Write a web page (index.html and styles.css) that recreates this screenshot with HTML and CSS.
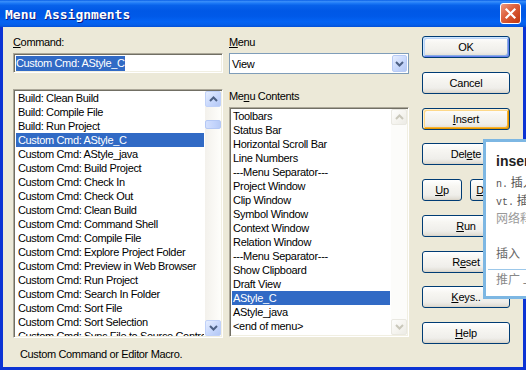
FILE: index.html
```html
<!DOCTYPE html>
<html>
<head>
<meta charset="utf-8">
<title>Menu Assignments</title>
<link rel="stylesheet" href="styles.css">
</head>
<body>
<div class="window">
  <div class="titlebar">
    <span class="title">Menu Assignments</span>
    <span class="close"><svg width="13" height="13" viewBox="0 0 13 13"><path d="M2.5 2.5 L10.5 10.5 M10.5 2.5 L2.5 10.5" stroke="#fff" stroke-width="2.2" stroke-linecap="square"/></svg></span>
  </div>
  <div class="frame">
    <div class="body">
      <div class="main">
        <div class="col-left">
          <div class="label"><u>C</u>ommand:</div>
          <div class="edit"><span class="sel-text">Custom Cmd: AStyle_C</span></div>
          <div class="list list-cmd">
            <div class="items">
              <div class="item">Build: Clean Build</div>
              <div class="item">Build: Compile File</div>
              <div class="item">Build: Run Project</div>
              <div class="item sel">Custom Cmd: AStyle_C</div>
              <div class="item">Custom Cmd: AStyle_java</div>
              <div class="item">Custom Cmd: Build Project</div>
              <div class="item">Custom Cmd: Check In</div>
              <div class="item">Custom Cmd: Check Out</div>
              <div class="item">Custom Cmd: Clean Build</div>
              <div class="item">Custom Cmd: Command Shell</div>
              <div class="item">Custom Cmd: Compile File</div>
              <div class="item">Custom Cmd: Explore Project Folder</div>
              <div class="item">Custom Cmd: Preview in Web Browser</div>
              <div class="item">Custom Cmd: Run Project</div>
              <div class="item">Custom Cmd: Search In Folder</div>
              <div class="item">Custom Cmd: Sort File</div>
              <div class="item">Custom Cmd: Sort Selection</div>
              <div class="item">Custom Cmd: Sync File to Source Control</div>
            </div>
            <div class="vscroll">
              <div class="sbtn"><svg width="9" height="6" viewBox="0 0 9 6"><path d="M1 5 L4.5 1.5 L8 5" fill="none" stroke="#4D6185" stroke-width="2"/></svg></div>
              <div class="track"><div class="thumb"></div></div>
              <div class="sbtn"><svg width="9" height="6" viewBox="0 0 9 6"><path d="M1 1 L4.5 4.5 L8 1" fill="none" stroke="#4D6185" stroke-width="2"/></svg></div>
            </div>
          </div>
        </div>
        <div class="col-mid">
          <div class="label"><u>M</u>enu</div>
          <div class="combo">
            <span class="combo-text">View</span>
            <span class="cbtn"><svg width="9" height="6" viewBox="0 0 9 6"><path d="M1 1 L4.5 4.5 L8 1" fill="none" stroke="#4D6185" stroke-width="2"/></svg></span>
          </div>
          <div class="label label-contents">Me<u>n</u>u Contents</div>
          <div class="list list-menu">
            <div class="items">
              <div class="item">Toolbars</div>
              <div class="item">Status Bar</div>
              <div class="item">Horizontal Scroll Bar</div>
              <div class="item">Line Numbers</div>
              <div class="item">---Menu Separator---</div>
              <div class="item">Project Window</div>
              <div class="item">Clip Window</div>
              <div class="item">Symbol Window</div>
              <div class="item">Context Window</div>
              <div class="item">Relation Window</div>
              <div class="item">---Menu Separator---</div>
              <div class="item">Show Clipboard</div>
              <div class="item">Draft View</div>
              <div class="item sel">AStyle_C</div>
              <div class="item">AStyle_java</div>
              <div class="item">&lt;end of menu&gt;</div>
            </div>
            <div class="vscroll vscroll-dis">
              <div class="sbtn"><svg width="9" height="6" viewBox="0 0 9 6"><path d="M1 5 L4.5 1.5 L8 5" fill="none" stroke="#C9C7BA" stroke-width="2"/></svg></div>
              <div class="track"></div>
              <div class="sbtn"><svg width="9" height="6" viewBox="0 0 9 6"><path d="M1 1 L4.5 4.5 L8 1" fill="none" stroke="#C9C7BA" stroke-width="2"/></svg></div>
            </div>
          </div>
        </div>
        <div class="col-btns">
          <div class="btn btn-default">OK</div>
          <div class="btn">Cancel</div>
          <div class="btn btn-hot"><u>I</u>nsert</div>
          <div class="btn">Del<u>e</u>te</div>
          <div class="btn-row">
            <div class="btn btn-sm"><u>U</u>p</div>
            <div class="btn btn-sm"><u>D</u>own</div>
          </div>
          <div class="btn"><u>R</u>un</div>
          <div class="btn">R<u>e</u>set</div>
          <div class="btn"><u>K</u>eys..</div>
          <div class="btn"><u>H</u>elp</div>
        </div>
      </div>
      <div class="status">Custom Command or Editor Macro.</div>
    </div>
  </div>
  <div class="tooltip">
    <div class="tt-word">insert</div>
    <div class="tt-line tt-def tt-first"><span class="tt-pos">n.</span> 插入物</div>
    <div class="tt-line tt-def"><span class="tt-pos">vt.</span> 插入</div>
    <div class="tt-line tt-web">网络释义</div>
    <div class="tt-line tt-plain">插入</div>
    <div class="tt-sep"></div>
    <div class="tt-line tt-promo">推广 上</div>
  </div>
</div>
</body>
</html>
```
FILE: styles.css
```css
* { box-sizing: border-box; }
html, body { margin: 0; padding: 0; }
body {
  width: 526px;
  height: 370px;
  overflow: hidden;
  font-family: "Liberation Sans", Arial, sans-serif;
  font-size: 11px;
  color: #000;
}
u { text-decoration: underline; text-underline-offset: 1px; }

.window {
  position: relative;
  width: 526px;
  height: 370px;
  display: flex;
  flex-direction: column;
  background: #0B33D4;
  overflow: hidden;
}

.titlebar {
  flex: none;
  height: 27px;
  display: flex;
  align-items: center;
  justify-content: space-between;
  padding: 0 5px 0 5px;
  background: linear-gradient(to bottom, #0A5FE6 0%, #3A8FFA 6%, #1C79F6 12%, #0862EA 20%, #0058E6 40%, #0059E8 60%, #0463F3 80%, #055FEA 92%, #0450D6 100%);
}
.title {
  margin-top: 2px;
  font-family: "DejaVu Sans Mono", monospace;
  font-weight: bold;
  font-size: 13px;
  color: #fff;
  text-shadow: 1px 1px 0 #0A1A80;
}
.close {
  width: 21px;
  height: 21px;
  border: 1px solid #fff;
  border-radius: 3px;
  background: linear-gradient(135deg, #EE9A80 0%, #DE6340 40%, #CF4A24 70%, #C0380F 100%);
  display: flex;
  align-items: center;
  justify-content: center;
}

.frame {
  flex: 1;
  display: flex;
  padding: 0 3px 3px 3px;
}
.body {
  flex: 1;
  background: #ECE9D8;
  display: flex;
  flex-direction: column;
  padding: 8px 0 0 10px;
}

.main {
  display: flex;
  align-items: flex-start;
}
.col-left {
  width: 210px;
  display: flex;
  flex-direction: column;
}
.col-mid {
  width: 180px;
  margin-left: 6px;
  display: flex;
  flex-direction: column;
}
.col-btns {
  width: 88px;
  margin-left: 13px;
  margin-top: 1px;
  display: flex;
  flex-direction: column;
  gap: 13.75px;
}

.label {
  height: 14px;
  line-height: 14px;
  letter-spacing: -0.35px;
  margin-bottom: 4px;
  white-space: nowrap;
}
.label-contents {
  margin-top: 15px;
  margin-bottom: 4px;
}

.edit {
  height: 20px;
  background: #fff;
  border: 1px solid;
  border-color: #ACA899 #FFFFFF #FFFFFF #ACA899;
  box-shadow: inset 1px 1px 0 #716F64, inset -1px -1px 0 #F1EFE2;
  padding: 2px 0 0 2px;
}
.sel-text {
  display: inline-block;
  height: 15px;
  line-height: 15px;
  background: #316AC5;
  color: #fff;
  letter-spacing: -0.35px;
  white-space: nowrap;
}

.combo {
  height: 21px;
  background: #fff;
  border: 1px solid #7F9DB9;
  display: flex;
  align-items: center;
  padding-left: 2px;
}
.combo-text {
  flex: 1;
  line-height: 14px;
  letter-spacing: -0.3px;
}
.cbtn {
  width: 15px;
  height: 17px;
  margin-right: 1px;
  border: 1px solid #B8CBF5;
  border-radius: 2px;
  background: linear-gradient(135deg, #E6EEFF 0%, #C8D8FC 55%, #B4C8F5 100%);
  display: flex;
  align-items: center;
  justify-content: center;
}

.list {
  background: #fff;
  border: 1px solid;
  border-color: #ACA899 #FFFFFF #FFFFFF #ACA899;
  box-shadow: inset 1px 1px 0 #716F64, inset -1px -1px 0 #F1EFE2;
  padding: 1px;
  display: flex;
}
.list-cmd {
  height: 249px;
  margin-top: 16px;
}
.list-menu {
  height: 230px;
}
.items {
  flex: 1;
  overflow: hidden;
  padding: 0 1px;
}
.item {
  height: 14px;
  line-height: 14px;
  padding-left: 2px;
  white-space: nowrap;
  overflow: hidden;
  letter-spacing: -0.35px;
}
.list-menu .item {
  padding-left: 1px;
  letter-spacing: -0.3px;
}
.item.sel {
  background: #316AC5;
  color: #fff;
}

.vscroll {
  width: 16px;
  display: flex;
  flex-direction: column;
  background: linear-gradient(to right, #F3F1EC, #FEFEFB);
}
.track {
  flex: 1;
}
.sbtn {
  height: 16px;
  border: 1px solid #C0D1F8;
  border-radius: 2px;
  background: linear-gradient(135deg, #E6EEFF 0%, #C8D8FC 55%, #B4C8F5 100%);
  display: flex;
  align-items: center;
  justify-content: center;
}
.thumb {
  margin-top: 13px;
  height: 9px;
  border: 1px solid #B4C8F5;
  border-radius: 2px;
  background: linear-gradient(to right, #D4E0FD, #C3D4FC 60%, #B8CBF6);
}
.vscroll-dis {
  background: #FCFCFA;
}
.vscroll-dis .sbtn {
  border-color: #E9E8E1;
  background: linear-gradient(135deg, #FDFDFC 0%, #F4F3EE 60%, #ECEBE5 100%);
}

.btn {
  height: 22px;
  border: 1px solid #003C74;
  border-radius: 3px;
  background: linear-gradient(to bottom, #FFFFFF 0%, #F7F6F2 30%, #EFEEEA 75%, #E3E0D8 92%, #D6D0C5 100%);
  display: flex;
  align-items: center;
  justify-content: center;
  line-height: 14px;
  letter-spacing: -0.2px;
  white-space: nowrap;
}
.btn-default {
  box-shadow: inset 1px 1px 0 #CEE7FF, inset -1px -1px 0 #6982EE, inset 2px 2px 0 #BCD4F6, inset -2px -2px 0 #89ADE4;
}
.btn-hot {
  box-shadow: inset 1px 1px 0 #FFF0CF, inset -1px -1px 0 #E59700, inset 2px 2px 0 #FDD889, inset -2px -2px 0 #F8B330;
}
.btn-row {
  display: flex;
  gap: 8px;
}
.btn-sm {
  width: 40px;
}

.status {
  margin-top: 3px;
  padding-left: 7px;
  height: 14px;
  line-height: 14px;
  letter-spacing: -0.35px;
}

.tooltip {
  position: absolute;
  left: 483px;
  top: 139px;
  width: 80px;
  height: 160px;
  background: #fff;
  border: 3px solid #7DB7E3;
  padding: 11px 0 0 10px;
  overflow: hidden;
  white-space: nowrap;
  font-family: "Noto Sans CJK SC", sans-serif;
}
.tt-word {
  height: 16px;
  line-height: 16px;
  font-family: "Liberation Sans", Arial, sans-serif;
  font-weight: bold;
  font-size: 14px;
  color: #222;
}
.tt-line {
  height: 18px;
  padding-top: 2px;
  line-height: 14px;
  font-size: 12px;
}
.tt-def {
  color: #555;
}
.tt-first {
  margin-top: 4px;
}
.tt-pos {
  font-family: "Liberation Mono", monospace;
  font-size: 10px;
}
.tt-web {
  color: #999;
}
.tt-plain {
  margin-top: 17px;
  color: #666;
}
.tt-sep {
  margin-top: 7px;
  margin-left: -8px;
  height: 1px;
  background: #9CC8EA;
}
.tt-promo {
  color: #888;
}
```
